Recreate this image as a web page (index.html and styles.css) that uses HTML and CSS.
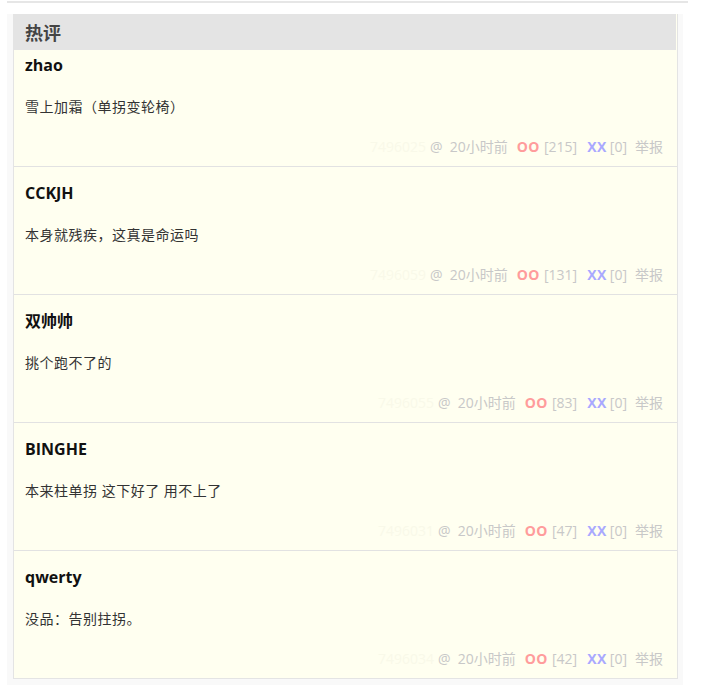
FILE: index.html
```html
<!DOCTYPE html>
<html lang="zh">
<head>
<meta charset="utf-8">
<title>热评</title>
<link rel="stylesheet" href="styles.css">
</head>
<body>
<div class="page">
  <div class="panel">
    <div class="hot">
      <h3 class="hot-title">热评</h3>
      <ol class="list">
        <li class="item">
          <div class="author">zhao</div>
          <p class="text">雪上加霜（单拐变轮椅）</p>
          <div class="meta">
            <span class="cid">7496025</span>
            <span class="at">@</span><span class="time">20小时前</span>
            <span class="oo">OO</span><span class="num">[215]</span>
            <span class="xx">XX</span><span class="num last">[0]</span>
            <span class="report">举报</span>
          </div>
        </li>
        <li class="item">
          <div class="author">CCKJH</div>
          <p class="text">本身就残疾，这真是命运吗</p>
          <div class="meta">
            <span class="cid">7496059</span>
            <span class="at">@</span><span class="time">20小时前</span>
            <span class="oo">OO</span><span class="num">[131]</span>
            <span class="xx">XX</span><span class="num last">[0]</span>
            <span class="report">举报</span>
          </div>
        </li>
        <li class="item">
          <div class="author">双帅帅</div>
          <p class="text">挑个跑不了的</p>
          <div class="meta">
            <span class="cid">7496055</span>
            <span class="at">@</span><span class="time">20小时前</span>
            <span class="oo">OO</span><span class="num">[83]</span>
            <span class="xx">XX</span><span class="num last">[0]</span>
            <span class="report">举报</span>
          </div>
        </li>
        <li class="item">
          <div class="author">BINGHE</div>
          <p class="text">本来柱单拐 这下好了 用不上了</p>
          <div class="meta">
            <span class="cid">7496031</span>
            <span class="at">@</span><span class="time">20小时前</span>
            <span class="oo">OO</span><span class="num">[47]</span>
            <span class="xx">XX</span><span class="num last">[0]</span>
            <span class="report">举报</span>
          </div>
        </li>
        <li class="item">
          <div class="author">qwerty</div>
          <p class="text">没品：告别拄拐。</p>
          <div class="meta">
            <span class="cid">7496034</span>
            <span class="at">@</span><span class="time">20小时前</span>
            <span class="oo">OO</span><span class="num">[42]</span>
            <span class="xx">XX</span><span class="num last">[0]</span>
            <span class="report">举报</span>
          </div>
        </li>
      </ol>
    </div>
  </div>
</div>
</body>
</html>
```

FILE: styles.css
```css
* { box-sizing: border-box; }

html, body {
  margin: 0;
  padding: 0;
  background: #ffffff;
}

body {
  font-family: "Open Sans", "Noto Sans CJK SC", "Noto Sans", sans-serif;
  color: #333;
}

.page {
  margin: 1px 0 0 7px;
  width: 681px;
  border-top: 2px solid #e6e6e6;
  padding-top: 11px;
}

.panel {
  width: 676px;
  background: #f9f9f9;
  padding: 0 6px 8px 6px;
}

.hot {
  background: #fffff0;
  border: 1px solid #e4e4e4;
  border-top: 0;
  width: 665px;
}

.hot-title {
  margin: 0;
  height: 36px;
  background: #e4e4e4;
  margin-right: 1px;
  padding-left: 11px;
  font-size: 18px;
  line-height: 36px;
  font-weight: bold;
  color: #444;
  font-family: "Noto Sans CJK SC", sans-serif;
}

.list {
  list-style: none;
  margin: 0;
  padding: 0;
}

.item {
  padding: 15px 14px 8px 11px;
  border-top: 1px solid #e2e2e2;
}

.item:first-child {
  border-top: 0;
  padding-top: 4px;
}

.author {
  font-size: 16px;
  line-height: 22px;
  font-weight: bold;
  color: #111;
}

.text {
  margin: 20px 0 0 0;
  font-size: 14px;
  line-height: 22px;
  letter-spacing: 0.5px;
  color: #333;
}

.meta {
  margin-top: 18px;
  height: 22px;
  display: flex;
  justify-content: flex-end;
  align-items: baseline;
  font-size: 14px;
  line-height: 22px;
  color: #c8c8c8;
}

.cid {
  color: #f9f9e9;
  margin-right: 4px;
}

.at {
  margin-right: 7px;
}

.time {
  margin-right: 9px;
}

.oo {
  font-weight: bold;
  color: #ff9c9c;
  letter-spacing: 0.5px;
  margin-right: 4px;
}

.xx {
  font-weight: bold;
  color: #a9a9ff;
  letter-spacing: 0.5px;
  margin-right: 3px;
}

.num {
  margin-right: 10px;
}

.num.last {
  margin-right: 8px;
}

.report {
  color: #c8c8c8;
}
```
